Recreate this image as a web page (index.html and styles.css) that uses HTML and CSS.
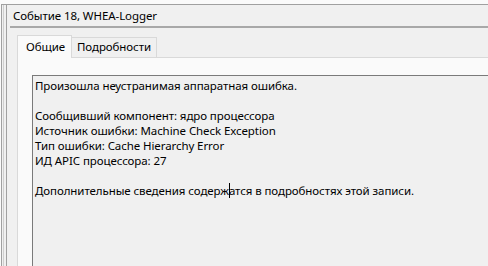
FILE: index.html
```html
<!DOCTYPE html>
<html lang="ru">
<head>
	<meta charset="utf-8">
	<title>Событие 18, WHEA-Logger</title>
	<link rel="stylesheet" href="styles.css">
</head>
<body>
	<div class="frame">
		<div class="frame-inner">
			<div class="client">
				<div class="title">Событие 18, WHEA-Logger</div>

				<div class="tabs">
					<div class="tab selected">Общие</div>
					<div class="tab">Подробности</div>
				</div>

				<div class="panel">
					<div class="textbox">
						<p>Произошла неустранимая аппаратная ошибка.</p>
						<p>Сообщивший компонент: ядро процессора<br>
						Источник ошибки: Machine Check Exception<br>
						Тип ошибки: Cache Hierarchy Error<br>
						ИД APIC процессора: 27</p>
						<p>Дополнительные сведения содерж<span class="caret"></span>атся в подробностях этой записи.</p>
					</div>
				</div>
			</div>
		</div>
	</div>
</body>
</html>
```

FILE: styles.css
```css
body, html {
	margin: 0;
	padding: 0;
	height: 100%;
	overflow: hidden;
}

body {
	background: #fafafa;
	font-family: "Noto Sans", "Open Sans", sans-serif;
	font-size: 11.5px;
	letter-spacing: -0.08px;
	color: #000;
}

* {
	box-sizing: border-box;
}

.frame {
	margin: 4px 0 0 1px;
	height: 262px;
	border-top: 1px solid #a0a0a0;
	border-left: 1px solid #a0a0a0;
	background: #f0f0f0;
}

.frame-inner {
	height: 100%;
	margin-left: 1px;
	border-left: 1px solid #cfcfcf;
	padding-left: 2px;
}

.client {
	display: flex;
	flex-direction: column;
	height: 100%;
	border-left: 1px solid #a0a0a0;
}

.title {
	flex: none;
	margin-left: 3px;
	height: 23px;
	padding-left: 3px;
	line-height: 21px;
	border-bottom: 2px solid #a8a8a8;
}

.tabs {
	flex: none;
	display: flex;
	align-items: flex-end;
	height: 29px;
	padding-left: 10px;
}

.tab {
	height: 20px;
	padding: 0 5px;
	line-height: 18px;
	background: #f0f0f0;
	border: 1px solid #d9d9d9;
	border-bottom: none;
	border-left: none;
}

.tab.selected {
	position: relative;
	z-index: 1;
	height: 23px;
	margin-bottom: -1px;
	padding: 0 6px 0 8px;
	line-height: 21px;
	background: #fafafa;
	border-left: 1px solid #d9d9d9;
}

.panel {
	flex: 1;
	display: flex;
	margin-left: 10px;
	padding: 17px 0 0 14px;
	background: #fafafa;
	border-top: 1px solid #d9d9d9;
	border-left: 1px solid #d9d9d9;
}

.textbox {
	flex: 1;
	padding: 2px 0 0 2px;
	background: #f0f0f0;
	border-top: 1px solid #7a7a7a;
	border-left: 1px solid #7a7a7a;
	line-height: 15px;
	white-space: nowrap;
	overflow: hidden;
}

.textbox p {
	margin: 0 0 15px;
}

.caret {
	display: inline-block;
	width: 1px;
	height: 15px;
	margin-right: -1px;
	background: #000;
	vertical-align: top;
}
```
